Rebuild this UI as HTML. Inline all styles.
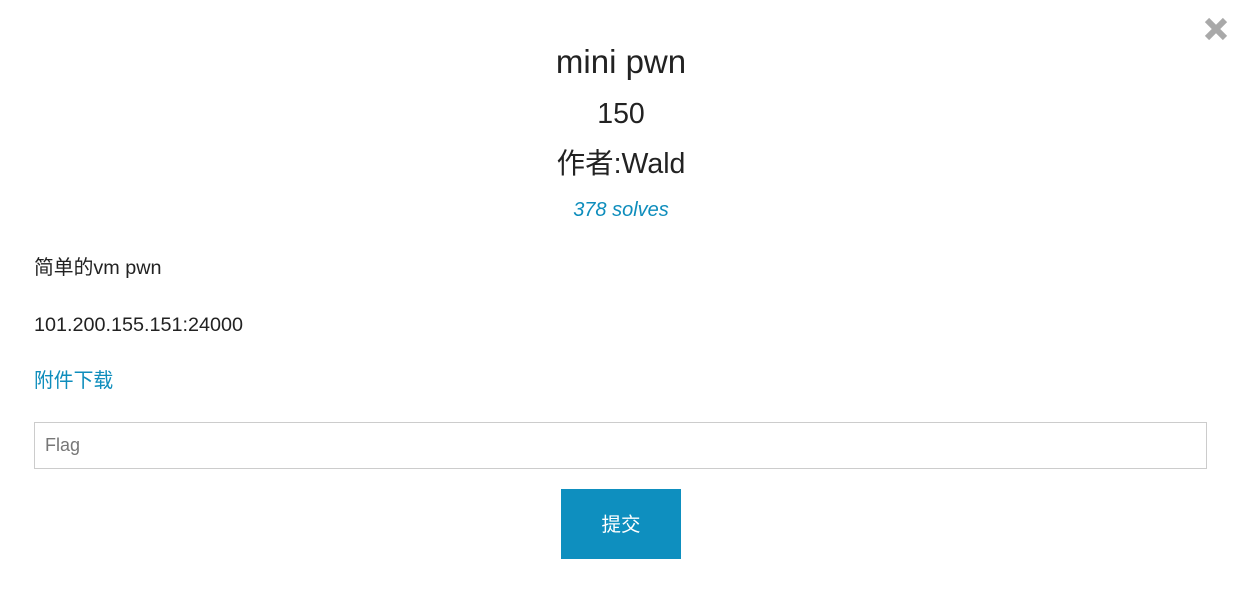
<!DOCTYPE html>
<html><head><meta charset="utf-8"><style>
body{margin:0;width:1242px;height:610px;background:#fff;font-family:"Liberation Sans","Noto Sans CJK SC",sans-serif;color:#222;position:relative;overflow:hidden}
.c{position:absolute;left:0;width:1242px;text-align:center;white-space:nowrap}
.t{position:absolute;left:34px;font-size:19.8px;white-space:nowrap}
</style></head><body>
<svg style="position:absolute;left:1203px;top:16px" width="26" height="26" viewBox="0 0 26 26"><path d="M4 4L22 22M22 4L4 22" stroke="#a9a9a9" stroke-width="6"/></svg>
<div class="c" style="top:43px;font-size:33px;line-height:38px">mini pwn</div>
<div class="c" style="top:97px;font-size:28.5px;line-height:34px">150</div>
<div class="c" style="top:147px;font-size:28.5px;line-height:34px">作者:Wald</div>
<div class="c" style="top:199px;font-size:20px;font-style:italic;color:#0e8dbc;line-height:22px">378 solves</div>
<div class="t" style="top:257px;line-height:22px">简单的vm pwn</div>
<div class="t" style="top:314px;line-height:22px">101.200.155.151:24000</div>
<div class="t" style="top:370px;line-height:22px;color:#0e8dbc">附件下载</div>
<div style="position:absolute;left:34px;top:422px;width:1171px;height:45px;border:1px solid #ccc;"><span style="position:absolute;left:10px;top:12px;font-size:18px;color:#777">Flag</span></div>
<div style="position:absolute;left:561px;top:489px;width:120px;height:70px;background:#0e8fbf;color:#fff;font-size:19.5px;line-height:72px;text-align:center">提交</div>
</body></html>
